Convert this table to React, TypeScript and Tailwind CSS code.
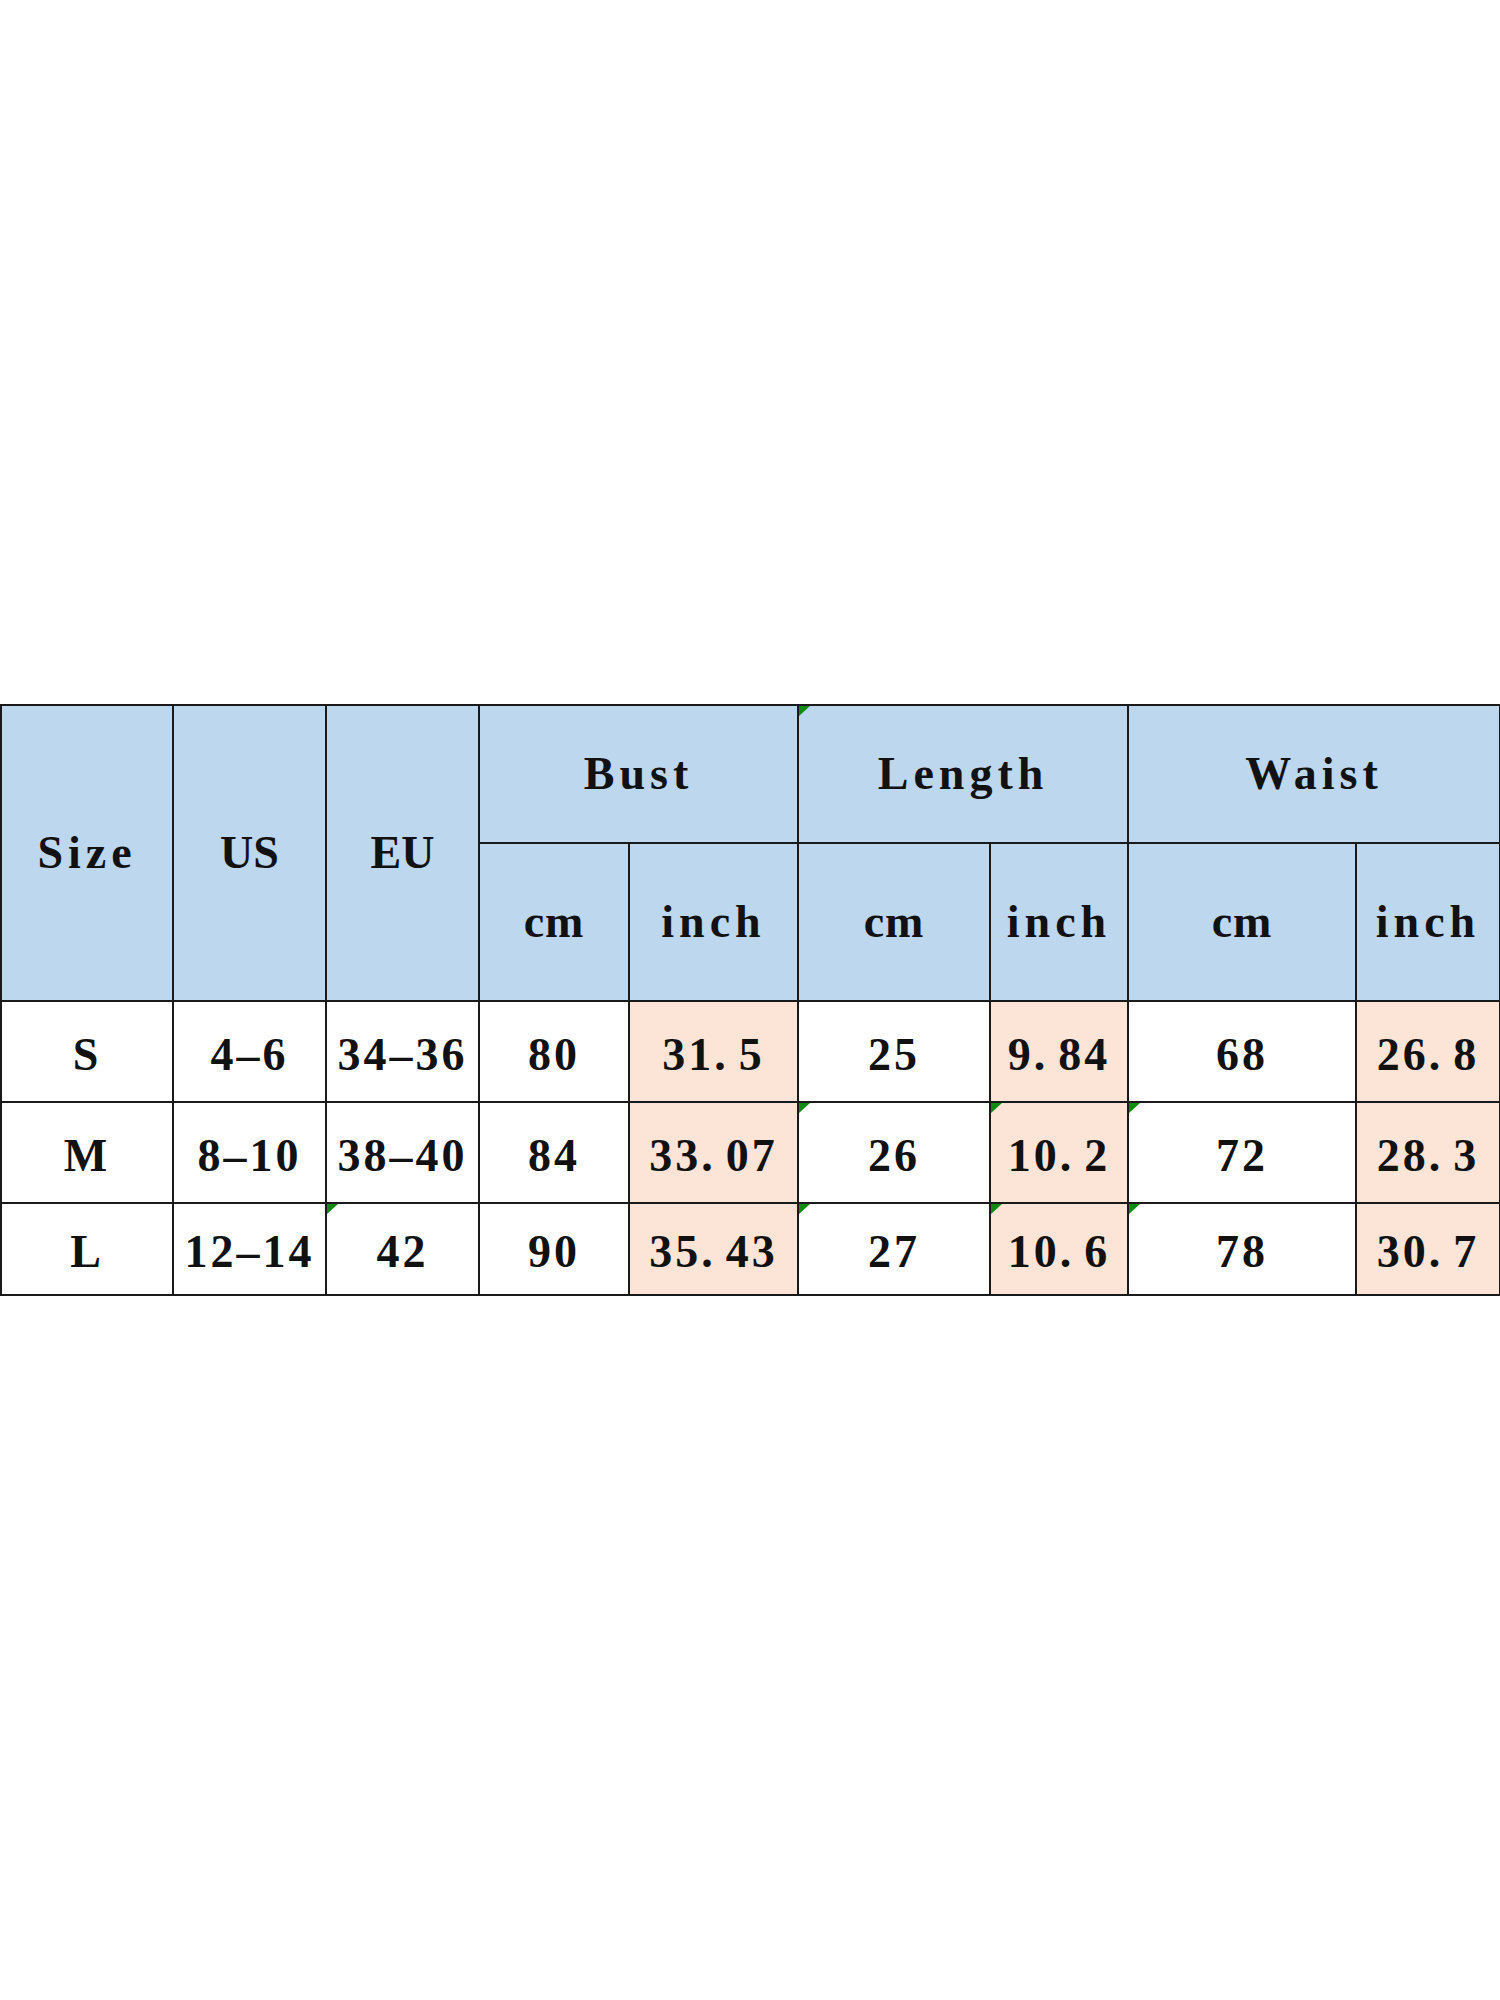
import React from "react";

// size chart: blue header, peach "inch" columns, small green corner marks
const blue = "bg-[#bdd7ee]";
const peach = "bg-[#fce4d6]";

type Cell = { v: string; inch?: boolean; mark?: boolean };

const rows: Cell[][] = [
  [
    { v: "S" },
    { v: "4–6" },
    { v: "34–36" },
    { v: "80" },
    { v: "31.5", inch: true },
    { v: "25" },
    { v: "9.84", inch: true },
    { v: "68" },
    { v: "26.8", inch: true },
  ],
  [
    { v: "M" },
    { v: "8–10" },
    { v: "38–40" },
    { v: "84" },
    { v: "33.07", inch: true },
    { v: "26", mark: true },
    { v: "10.2", inch: true, mark: true },
    { v: "72", mark: true },
    { v: "28.3", inch: true },
  ],
  [
    { v: "L" },
    { v: "12–14" },
    { v: "42", mark: true },
    { v: "90" },
    { v: "35.43", inch: true },
    { v: "27", mark: true },
    { v: "10.6", inch: true, mark: true },
    { v: "78", mark: true },
    { v: "30.7", inch: true },
  ],
];

function Mark() {
  return (
    <span className="absolute left-0 top-0 w-0 h-0 border-t-[10px] border-r-[11px] border-t-[#108a10] border-r-transparent" />
  );
}

// the sheet's font gives the decimal point a full digit width
function Num({ v }: { v: string }) {
  const [a, b] = v.split(".");
  if (b === undefined) return <>{v}</>;
  return (
    <>
      {a}
      <span className="mr-[10px]">.</span>
      {b}
    </>
  );
}

const th = "relative border-2 border-[#1a1a1a] text-center align-middle font-bold tracking-[5px] p-0";
const td = "relative border-2 border-[#1a1a1a] text-center align-middle tracking-[3px] p-0";

export default function App() {
  return (
    <div
      className="h-[2000px] w-[1500px] bg-white flex flex-col justify-center text-[#111]"
      style={{ fontFamily: '"Liberation Serif", "Times New Roman", serif' }}
    >
      <table className="table-fixed border-collapse w-[1499px] text-[46px] font-bold leading-none">
        <colgroup>
          <col className="w-[172px]" />
          <col className="w-[153px]" />
          <col className="w-[153px]" />
          <col className="w-[150px]" />
          <col className="w-[169px]" />
          <col className="w-[192px]" />
          <col className="w-[138px]" />
          <col className="w-[228px]" />
          <col className="w-[144px]" />
        </colgroup>
        <thead>
          <tr className="h-[138px]">
            <th rowSpan={2} className={`${th} ${blue}`}>Size</th>
            <th rowSpan={2} className={`${th} ${blue} !tracking-[0px]`}>US</th>
            <th rowSpan={2} className={`${th} ${blue} !tracking-[0px]`}>EU</th>
            <th colSpan={2} className={`${th} ${blue}`}>Bust</th>
            <th colSpan={2} className={`${th} ${blue}`}>
              <Mark />
              Length
            </th>
            <th colSpan={2} className={`${th} ${blue}`}>Waist</th>
          </tr>
          <tr className="h-[158px]">
            <th className={`${th} ${blue} !tracking-[1px]`}>cm</th>
            <th className={`${th} ${blue}`}>inch</th>
            <th className={`${th} ${blue} !tracking-[1px]`}>cm</th>
            <th className={`${th} ${blue}`}>inch</th>
            <th className={`${th} ${blue} !tracking-[1px]`}>cm</th>
            <th className={`${th} ${blue}`}>inch</th>
          </tr>
        </thead>
        <tbody>
          {rows.map((r, i) => (
            <tr key={i} className={i === 2 ? "h-[92px]" : "h-[101px]"}>
              {r.map((c, j) => (
                <td key={j} className={`${td} ${c.inch ? peach : "bg-white"}`}>
                  {c.mark && <Mark />}
                  <span className="relative top-[3px]">
                    <Num v={c.v} />
                  </span>
                </td>
              ))}
            </tr>
          ))}
        </tbody>
      </table>
    </div>
  );
}
